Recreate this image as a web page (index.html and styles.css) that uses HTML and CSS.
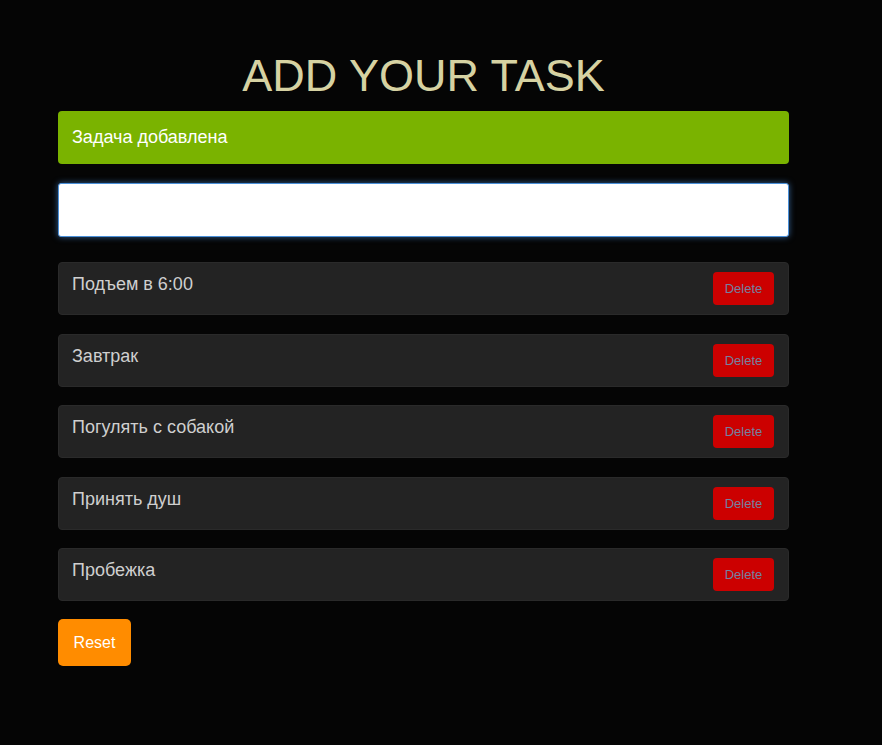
FILE: index.html
```html
<!DOCTYPE html>
<html lang="ru">
<head>
<meta charset="utf-8">
<title>Tasks</title>
<link rel="stylesheet" href="styles.css">
</head>
<body>
<div class="app">
  <h1 class="title">ADD YOUR TASK</h1>
  <div class="notice">Задача добавлена</div>
  <input class="task-input" type="text">
  <ul class="list">
    <li class="item"><span class="item-text">Подъем в 6:00</span><button class="del">Delete</button></li>
    <li class="item"><span class="item-text">Завтрак</span><button class="del">Delete</button></li>
    <li class="item"><span class="item-text">Погулять с собакой</span><button class="del">Delete</button></li>
    <li class="item"><span class="item-text">Принять душ</span><button class="del">Delete</button></li>
    <li class="item"><span class="item-text">Пробежка</span><button class="del">Delete</button></li>
  </ul>
  <button class="reset">Reset</button>
</div>
</body>
</html>
```
FILE: styles.css
```css
html, body {
  margin: 0;
  padding: 0;
  background: #050505;
  font-family: "Liberation Sans", Arial, sans-serif;
}
.app {
  width: 731px;
  margin-left: 58px;
  padding-top: 51px;
  display: flex;
  flex-direction: column;
}
.title {
  margin: 0 0 10px;
  text-align: center;
  font-weight: normal;
  font-size: 45px;
  line-height: 50px;
  color: #d6d2a2;
}
.notice {
  box-sizing: border-box;
  height: 53px;
  background: #7ab300;
  border-radius: 4px;
  color: #fff;
  font-size: 18px;
  line-height: 20px;
  padding: 16px 14px;
}
.task-input {
  box-sizing: border-box;
  margin-top: 19px;
  height: 54px;
  border: 1px solid #4a90d9;
  border-radius: 3px;
  background: #fff;
  box-shadow: 0 0 6px rgba(80, 150, 230, 0.6);
  outline: none;
}
.list {
  list-style: none;
  margin: 25px 0 0;
  padding: 0;
  display: flex;
  flex-direction: column;
  gap: 18.5px;
}
.item {
  box-sizing: border-box;
  height: 53px;
  background: #232323;
  border: 1px solid #2a2a2a;
  border-radius: 4px;
  display: flex;
  justify-content: space-between;
  align-items: flex-start;
  padding: 11px 14px 0 13px;
}
.item-text {
  color: #cfcfcf;
  font-size: 18px;
  line-height: 21px;
}
.del {
  margin-top: -2px;
  width: 61px;
  height: 33px;
  border: none;
  border-radius: 4px;
  background: #cc0000;
  color: #7480a0;
  font-family: "Liberation Sans", Arial, sans-serif;
  font-size: 13px;
  padding: 0;
}
.reset {
  align-self: flex-start;
  margin-top: 18px;
  width: 73px;
  height: 47px;
  border: none;
  border-radius: 5px;
  background: #ff8c00;
  color: #fff;
  font-family: "Liberation Sans", Arial, sans-serif;
  font-size: 16px;
  padding: 0;
}
```
